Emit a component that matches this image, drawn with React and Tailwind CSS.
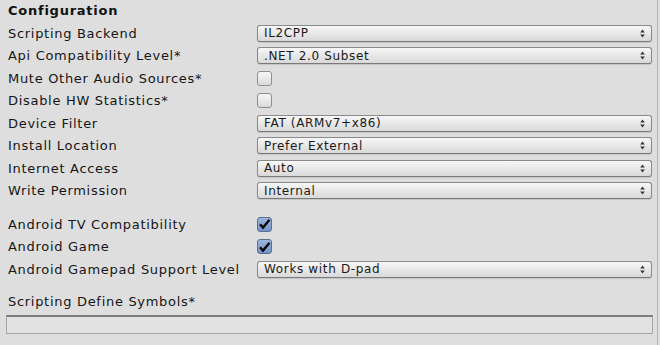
import React from "react";

const font = { fontFamily: '"DejaVu Sans", "Liberation Sans", sans-serif' };

function Arrow() {
  return (
    <svg width="5" height="9" viewBox="0 0 5 9" className="shrink-0">
      <path d="M2.5 0.5 L4.8 3.6 L0.2 3.6 Z" fill="#333" />
      <path d="M2.5 8.5 L4.8 5.4 L0.2 5.4 Z" fill="#333" />
    </svg>
  );
}

function Dropdown({ value }) {
  return (
    <div className="flex-1 h-[17px] flex items-center justify-between pl-[6px] pr-[6px] rounded-[3px] border border-[#8a8a8a] border-b-[#7a7a7a] bg-gradient-to-b from-[#f7f7f7] to-[#d9d9d9] shadow-[0_1px_1px_rgba(0,0,0,0.12)]">
      <span className="text-[12px] leading-none tracking-[0.65px] text-[#1a1a1a]">{value}</span>
      <Arrow />
    </div>
  );
}

function Checkbox({ checked }) {
  if (checked) {
    return (
      <div className="w-[15px] h-[15px] rounded-[3px] border border-[#5a6f90] bg-gradient-to-b from-[#9cb6dd] to-[#7394c8] flex items-center justify-center">
        <svg width="13" height="12" viewBox="0 0 13 12">
          <path d="M2 6.2 L5 9.6 L11.5 1.8" fill="none" stroke="#0a0a0a" strokeWidth="2.4" strokeLinejoin="miter" />
        </svg>
      </div>
    );
  }
  return (
    <div className="w-[15px] h-[15px] rounded-[3px] border border-[#8f8f8f] bg-gradient-to-b from-[#f7f7f7] to-[#dadada]" />
  );
}

function Row({ label, children }) {
  return (
    <div className="h-[22.5px] flex items-center">
      <div className="w-[257px] pl-2 text-[13px] tracking-[0.7px] text-[#161616] whitespace-nowrap">{label}</div>
      <div className="flex-1 flex items-center pr-[5px]">{children}</div>
    </div>
  );
}

export default function App() {
  return (
    <div className="w-[660px] h-[345px] bg-[#dedede] flex overflow-hidden" style={font}>
      <div className="w-[657px] flex flex-col">
        <div className="h-[22px] flex items-center pl-2 text-[13px] font-bold tracking-[0.75px] text-[#111]">Configuration</div>
        <Row label="Scripting Backend"><Dropdown value="IL2CPP" /></Row>
        <Row label="Api Compatibility Level*"><Dropdown value=".NET 2.0 Subset" /></Row>
        <Row label="Mute Other Audio Sources*"><Checkbox /></Row>
        <Row label="Disable HW Statistics*"><Checkbox /></Row>
        <Row label="Device Filter"><Dropdown value="FAT (ARMv7+x86)" /></Row>
        <Row label="Install Location"><Dropdown value="Prefer External" /></Row>
        <Row label="Internet Access"><Dropdown value="Auto" /></Row>
        <Row label="Write Permission"><Dropdown value="Internal" /></Row>
        <div className="h-[11px]" />
        <Row label="Android TV Compatibility"><Checkbox checked /></Row>
        <Row label="Android Game"><Checkbox checked /></Row>
        <Row label="Android Gamepad Support Level"><Dropdown value="Works with D-pad" /></Row>
        <div className="h-[10px]" />
        <Row label="Scripting Define Symbols*" />
        <div className="mt-[1.5px] ml-[6px] mr-[4px] h-[19px] border border-[#a5a5a5] border-t-2 border-t-[#7c7c7c] bg-[#e2e2e2]" />
      </div>
      <div className="w-px bg-[#b4b4b4]" />
      <div className="flex-1" />
    </div>
  );
}
